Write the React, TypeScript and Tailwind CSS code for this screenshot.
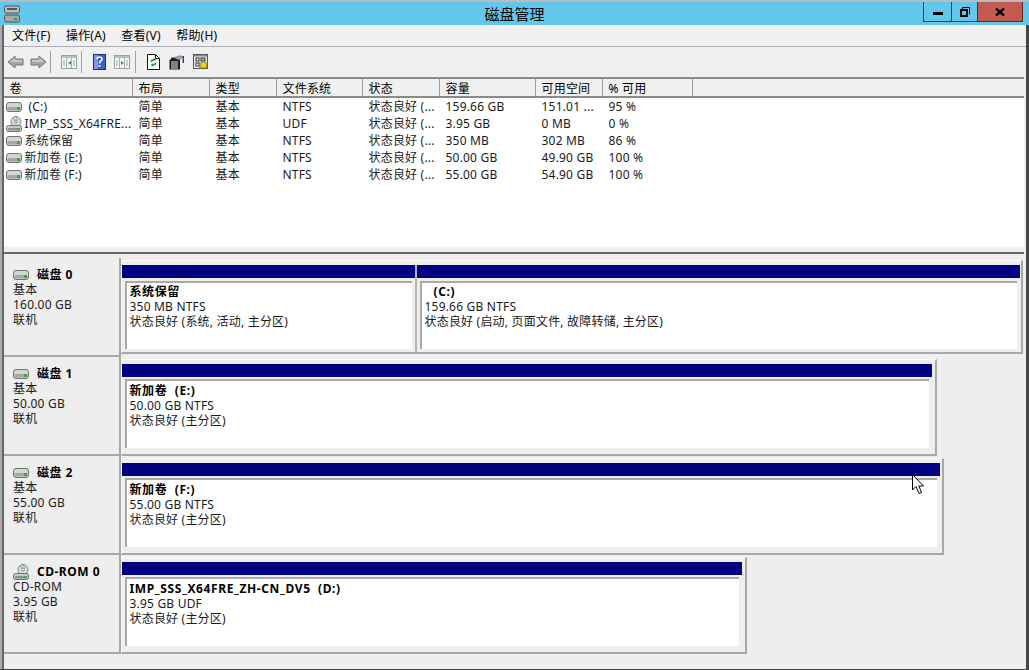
import React from 'react'

const font = "[font-family:'Noto_Sans','Noto_Sans_CJK_SC',sans-serif]"

const columns = [
  { label: '卷', w: 'w-[129px]' },
  { label: '布局', w: 'w-[77px]' },
  { label: '类型', w: 'w-[67px]' },
  { label: '文件系统', w: 'w-[86px]' },
  { label: '状态', w: 'w-[77px]' },
  { label: '容量', w: 'w-[96px]' },
  { label: '可用空间', w: 'w-[67px]' },
  { label: '% 可用', w: 'w-[90px]' },
]

const rows = [
  { cd: false, cells: [' (C:)', '简单', '基本', 'NTFS', '状态良好 (...', '159.66 GB', '151.01 ...', '95 %'] },
  { cd: true, cells: ['IMP_SSS_X64FRE...', '简单', '基本', 'UDF', '状态良好 (...', '3.95 GB', '0 MB', '0 %'] },
  { cd: false, cells: ['系统保留', '简单', '基本', 'NTFS', '状态良好 (...', '350 MB', '302 MB', '86 %'] },
  { cd: false, cells: ['新加卷 (E:)', '简单', '基本', 'NTFS', '状态良好 (...', '50.00 GB', '49.90 GB', '100 %'] },
  { cd: false, cells: ['新加卷 (F:)', '简单', '基本', 'NTFS', '状态良好 (...', '55.00 GB', '54.90 GB', '100 %'] },
]

function DiskIcon() {
  return (
    <svg width="16" height="10" viewBox="0 0 16 10" className="shrink-0">
      <rect x="0.5" y="0.5" width="15" height="9" rx="2.5" fill="#d4d6d4" stroke="#6f7472" />
      <rect x="1.5" y="5" width="13" height="3.5" rx="1" fill="#a3a7a5" />
      <rect x="11" y="5" width="3" height="3" fill="#35a835" />
    </svg>
  )
}

function CdIcon() {
  return (
    <svg width="16" height="16" viewBox="0 0 16 16" className="shrink-0">
      <circle cx="10" cy="5.5" r="5" fill="#d8dcdc" stroke="#7d8585" />
      <circle cx="10" cy="5.5" r="1.4" fill="#fff" stroke="#7d8585" />
      <path d="M10 1 L12 4 M7 2 L9 4" stroke="#7fb27f" />
      <rect x="0.5" y="9.5" width="15" height="6" rx="2" fill="#c9cbc9" stroke="#6f7472" />
      <rect x="2" y="12" width="12" height="2.5" fill="#8f9391" />
      <rect x="11" y="12" width="3" height="2" fill="#3fae3f" />
    </svg>
  )
}

function Back({ flip }: { flip?: boolean }) {
  return (
    <svg width="17" height="14" viewBox="0 0 17 14" className={flip ? 'scale-x-[-1]' : ''}>
      <path d="M1 7 L8 1 V4 H16 V10 H8 V13 Z" fill="#a3a7a5" stroke="#737775" />
      <path d="M3 7 L8 3 V5 H15 V7 Z" fill="#c6c9c7" />
    </svg>
  )
}

function PaneIcon({ right }: { right?: boolean }) {
  return (
    <svg width="16" height="14" viewBox="0 0 16 14">
      <rect x="0.5" y="0.5" width="15" height="13" fill="#f4f6f6" stroke="#9aa3a3" />
      <rect x="1" y="1" width="14" height="2" fill="#b6bfc4" />
      <path d="M5.5 3 V13 M10.5 3 V13" stroke="#a8b0b0" />
      <path d="M2 6 H4 M2 8 H4 M2 10 H4 M12 6 H14 M12 8 H14 M12 10 H14" stroke="#9aa3a3" />
      {right ? <path d="M7 6 L10 8 L7 10 Z" fill="#2f9e4f" /> : <path d="M10 6 L7 8 L10 10 Z" fill="#2f9e4f" />}
    </svg>
  )
}

function HelpIcon() {
  return (
    <svg width="13" height="16" viewBox="0 0 13 16">
      <rect x="0.5" y="0.5" width="12" height="15" fill="#3d5fc4" stroke="#1d2f86" />
      <rect x="1" y="1" width="4" height="14" fill="#7f97e0" />
      <path d="M4 5 Q4 3 6.5 3 Q9 3 9 5 Q9 6.5 7.5 7.2 Q6.5 7.8 6.5 9.5" fill="none" stroke="#fff" strokeWidth="1.6" />
      <rect x="5.6" y="11" width="1.8" height="2" fill="#fff" />
    </svg>
  )
}

function RefreshIcon() {
  return (
    <svg width="13" height="16" viewBox="0 0 13 16">
      <path d="M0.5 0.5 H8.5 L12.5 4.5 V15.5 H0.5 Z" fill="#fff" stroke="#111" />
      <path d="M8.5 0.5 V4.5 H12.5" fill="none" stroke="#111" />
      <path d="M3.5 8 Q3.5 5 7 5 L6 3.5 L9.5 5.5 L6.5 7.5 L7 6.5 Q5 6.5 5 8 Z" fill="#1f9a2f" />
      <path d="M9.5 8.5 Q9.5 11.5 6 11.5 L7 13 L3.5 11 L6.5 9 L6 10 Q8 10 8 8.5 Z" fill="#1f9a2f" />
    </svg>
  )
}

function PropsIcon() {
  return (
    <svg width="16" height="15" viewBox="0 0 16 15">
      <path d="M0.5 5.5 L3 2.5 H11 V14.5 H0.5 Z" fill="#1c1c1c" />
      <path d="M2 7 H9 M2 9 H9 M2 11 H9 M2 13 H9" stroke="#e8e8e8" />
      <path d="M5 3 L10 0.8 L14 1.5 L10.5 5 Z" fill="#a7a9ad" stroke="#555" strokeWidth="0.5" />
      <rect x="13.5" y="1" width="1.5" height="7" fill="#3a3a8c" />
    </svg>
  )
}

function SettingsIcon() {
  return (
    <svg width="15" height="16" viewBox="0 0 15 16">
      <rect x="0.5" y="0.5" width="14" height="14" fill="#e9e9e9" stroke="#555" />
      <rect x="1" y="1" width="13" height="1.5" fill="#888" />
      <rect x="3" y="4" width="3" height="3" fill="#fff" stroke="#333" />
      <rect x="8" y="4" width="4" height="3" fill="#bbb" stroke="#333" />
      <rect x="3" y="9" width="3" height="3" fill="#fff" stroke="#333" />
      <path d="M10.5 7 L12 9 L14.5 9 L13.5 11 L14.5 13.5 L12 13 L10.5 15.5 L9 13 L6.5 13.5 L7.5 11 L6.5 9 L9 9 Z" fill="#f1d21f" stroke="#6a5a00" strokeWidth="0.6" />
    </svg>
  )
}

function Partition({ name, size, status, w, tall, nameIndent, sep }: { name: string; size: string; status: string; w: string; tall?: boolean; nameIndent?: boolean; sep?: boolean }) {
  return (
    <div className={`${w} shrink-0 flex flex-col ${sep ? 'border-r-2 border-[#b4b4b4]' : ''}`}>
      <div className="h-[13px] bg-[#000080] shrink-0" />
      <div className={`flex-1 ${tall ? 'pt-[2px]' : 'pt-[3px]'} px-[3px] pb-[3px] bg-[#eeeeee]`}>
        <div className={`${tall ? 'h-[69px] pt-[2px]' : 'h-[68px] pt-[1px]'} bg-white border-t-2 border-l-2 border-[#a8a8a8] pl-[3px] text-[12px] leading-[15px] text-[#1a1a1a] whitespace-pre`}>
          <div className={`font-bold text-black tracking-[0.6px] ${nameIndent ? 'pl-[9px]' : ''}`}>{name}</div>
          <div>{size}</div>
          <div>{status}</div>
        </div>
      </div>
    </div>
  )
}

function DiskRow({ title, kind, size, cd, children, frame }: { title: string; kind: string; size: string; cd?: boolean; children: React.ReactNode; frame: string }) {
  return (
    <div className="h-[99px] flex shrink-0">
      <div className="w-[117px] shrink-0 border-r-2 border-b-2 border-[#a8a8a8] pl-[9.5px] pt-[9px] text-[12px] leading-[15px] text-[#1a1a1a]">
        <div className="flex items-center gap-[8px] h-[15px] font-bold text-black tracking-[0.5px]">
          {cd ? <CdIcon /> : <DiskIcon />}
          <span>{title}</span>
        </div>
        <div>{kind}</div>
        <div>{size}</div>
        <div>联机</div>
      </div>
      <div className="flex-1 pt-[2px]">
        <div className={`${frame} border-r-2 border-b-2 border-[#a8a8a8] border-t border-l border-t-[#fafafa] border-l-[#fafafa] pt-[4px] flex`}>{children}</div>
      </div>
    </div>
  )
}

export default function App() {
  return (
    <div className={`${font} relative w-[1029px] h-[670px] overflow-hidden bg-[#eeeeee] flex flex-col text-[12px] text-[#1a1a1a] tracking-[0.2px]`}>
      <div className="h-[2px] bg-[#b9bcbe] shrink-0" />
      <div className="h-[23px] bg-[#63c7ec] shrink-0 flex items-start relative">
        <div className="absolute left-[4px] top-[3px]">
          <svg width="16" height="18" viewBox="0 0 16 18">
            <rect x="0.5" y="1" width="15" height="7" rx="1.5" fill="#b8bdbd" stroke="#555" />
            <rect x="3" y="3" width="10" height="2" fill="#555" />
            <rect x="0.5" y="10" width="15" height="7" rx="1.5" fill="#a3a8a8" stroke="#555" />
            <rect x="10" y="13" width="3" height="2" fill="#2f9e4f" />
          </svg>
        </div>
        <div className="flex-1 text-center text-[15px] leading-[24px] text-black tracking-normal">磁盘管理</div>
        <div className="absolute right-[6px] top-0 flex h-[20px]">
          <div className="w-[28px] border-b border-l border-[#24414f] flex items-center justify-center pt-[4px]">
            <div className="w-[10px] h-[3px] bg-black" />
          </div>
          <div className="w-[26px] border-b border-l border-[#24414f] flex items-center justify-center">
            <svg width="10" height="10" viewBox="0 0 10 10">
              <path d="M2.5 0.5 H9.5 V7.5 M2.5 0.5 V2" fill="none" stroke="#000" />
              <rect x="1" y="3" width="6" height="6" fill="none" stroke="#000" strokeWidth="2" />
            </svg>
          </div>
          <div className="w-[46px] bg-[#c4594e] border border-t-0 border-[#5a2d2a] flex items-center justify-center">
            <svg width="10" height="8" viewBox="0 0 10 8">
              <path d="M1 0.5 L9 7.5 M9 0.5 L1 7.5" stroke="#000" strokeWidth="2.4" />
            </svg>
          </div>
        </div>
      </div>

      <div className="flex-1 min-h-0 flex bg-[#eeeeee]">
        <div className="w-[2px] bg-[#a9abad] shrink-0" />
        <div className="w-[1.5px] bg-[#666666] shrink-0" />
        <div className="flex-1 min-w-0 flex flex-col">
          <div className="h-[22px] shrink-0 border-b border-[#adadb3] bg-[#f0f0f0] flex items-center gap-[15.5px] pl-[8.5px] text-[12px] text-black">
            <span>文件(F)</span>
            <span>操作(A)</span>
            <span>查看(V)</span>
            <span>帮助(H)</span>
          </div>
          <div className="h-[30px] shrink-0 bg-[#f0f0f0] flex items-center pl-[3px]">
            <Back />
            <div className="ml-[6px]"><Back flip /></div>
            <div className="w-px h-[22px] bg-[#a0a0a0] ml-[3px]" />
            <div className="ml-[10px]"><PaneIcon /></div>
            <div className="w-px h-[22px] bg-[#a0a0a0] ml-[4px]" />
            <div className="ml-[11px]"><HelpIcon /></div>
            <div className="ml-[8px]"><PaneIcon right /></div>
            <div className="w-px h-[22px] bg-[#a0a0a0] ml-[5px]" />
            <div className="ml-[11px]"><RefreshIcon /></div>
            <div className="ml-[9px]"><PropsIcon /></div>
            <div className="ml-[8px]"><SettingsIcon /></div>
          </div>

          <div className="h-[170px] shrink-0 bg-white border-t-2 border-[#8a8a8a] mr-[2px] overflow-hidden">
            <div className="h-[19px] flex bg-[#f0f0f0] border-b-2 border-[#8a8a8a]">
              {columns.map(c => (
                <div key={c.label} className={`${c.w} shrink-0 pl-[6px] border-r border-[#9a9a9a] leading-[19px] text-black`}>{c.label}</div>
              ))}
            </div>
            {rows.map(r => (
              <div key={r.cells[0]} className="h-[17px] flex leading-[17px] whitespace-nowrap">
                {r.cells.map((text, i) => (
                  <div key={i} className={`${columns[i].w} shrink-0 ${i === 0 ? 'pl-[2px] flex items-center gap-[3px]' : 'pl-[6px]'}`}>
                    {i === 0 && (r.cd ? <CdIcon /> : <DiskIcon />)}
                    <span className={i === 0 && text.startsWith(' ') ? 'pl-[4px]' : ''}>{text.trim()}</span>
                  </div>
                ))}
              </div>
            ))}
          </div>

          <div className="h-[7px] shrink-0 border-b-2 border-[#666666] bg-[#eeeeee] mr-[2px]" />
          <div className="h-[4px] shrink-0" />

          <DiskRow title="磁盘 0" kind="基本" size="160.00 GB" frame="w-[902px] h-[94px]">
            <Partition w="w-[295px]" sep name="系统保留" size="350 MB NTFS" status="状态良好 (系统, 活动, 主分区)" />
            <Partition w="w-[603px]" nameIndent name="(C:)" size="159.66 GB NTFS" status="状态良好 (启动, 页面文件, 故障转储, 主分区)" />
          </DiskRow>
          <DiskRow title="磁盘 1" kind="基本" size="50.00 GB" frame="w-[816px] h-[97px]">
            <Partition w="w-[810px]" tall name="新加卷  (E:)" size="50.00 GB NTFS" status="状态良好 (主分区)" />
          </DiskRow>
          <DiskRow title="磁盘 2" kind="基本" size="55.00 GB" frame="w-[823px] h-[97px]">
            <Partition w="w-[818px]" tall name="新加卷  (F:)" size="55.00 GB NTFS" status="状态良好 (主分区)" />
          </DiskRow>
          <DiskRow title="CD-ROM 0" kind="CD-ROM" size="3.95 GB" cd frame="w-[626px] h-[97px]">
            <Partition w="w-[620px]" tall name="IMP_SSS_X64FRE_ZH-CN_DV5  (D:)" size="3.95 GB UDF" status="状态良好 (主分区)" />
          </DiskRow>
        </div>
        <div className="w-[3px] bg-[#444444] shrink-0" />
      </div>
      <div className="h-[1px] bg-[#444444] shrink-0" />

      <svg width="13" height="21" viewBox="0 0 13 21" className="absolute left-[912px] top-[474px]">
        <path d="M0.5 0.5 V16 L4 12.5 L7 19.5 L9.5 18.5 L6.8 12 H11.5 Z" fill="#fff" stroke="#000" />
      </svg>
    </div>
  )
}
